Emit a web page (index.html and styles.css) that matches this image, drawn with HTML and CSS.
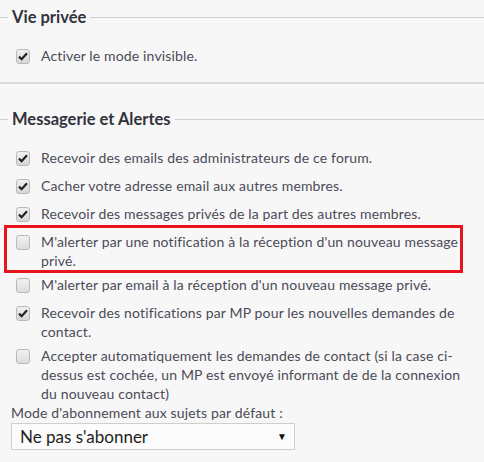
FILE: index.html
```html
<!DOCTYPE html>
<html lang="fr">
<head>
    <meta charset="UTF-8">
    <title>Préférences</title>
    <link rel="stylesheet" href="styles.css">
</head>
<body>
    <form class="prefs">
        <fieldset class="group">
            <legend>Vie privée</legend>
            <div class="options">
                <label class="option"><input type="checkbox" checked><span>Activer le mode invisible.</span></label>
            </div>
        </fieldset>

        <div class="separator"></div>

        <fieldset class="group">
            <legend>Messagerie et Alertes</legend>
            <div class="options">
                <label class="option"><input type="checkbox" checked><span>Recevoir des emails des administrateurs de ce forum.</span></label>
                <label class="option"><input type="checkbox" checked><span>Cacher votre adresse email aux autres membres.</span></label>
                <label class="option"><input type="checkbox" checked><span>Recevoir des messages privés de la part des autres membres.</span></label>
                <label class="option highlight"><input type="checkbox"><span>M'alerter par une notification à la réception d'un nouveau message privé.</span></label>
                <label class="option"><input type="checkbox"><span>M'alerter par email à la réception d'un nouveau message privé.</span></label>
                <label class="option"><input type="checkbox" checked><span>Recevoir des notifications par MP pour les nouvelles demandes de contact.</span></label>
                <label class="option"><input type="checkbox"><span>Accepter automatiquement les demandes de contact (si la case ci-dessus est cochée, un MP est envoyé informant de de la connexion du nouveau contact)</span></label>
            </div>

            <label class="field-label" for="sub-mode">Mode d'abonnement aux sujets par défaut :</label>
            <div class="select-wrap">
                <select id="sub-mode">
                    <option>Ne pas s'abonner</option>
                    <option>S'abonner sans notification</option>
                    <option>S'abonner avec notification</option>
                </select>
            </div>
        </fieldset>
    </form>
</body>
</html>
```

FILE: styles.css
```css
body {
    margin: 0;
    background-color: #f7f7f7;
    font-family: Lato, "Open Sans", sans-serif;
    font-size: 14px;
    letter-spacing: 0.15px;
    color: #4b4b57;
}

.prefs {
    margin: 0;
}

.group {
    margin: 6px 0 0;
    padding: 0 22px 0 11px;
    border: none;
    border-top: 1px solid #cdcdcd;
    min-width: 0;
}

.group legend {
    margin-left: -3px;
    padding: 0 4px;
    font-size: 16.5px;
    line-height: 22px;
    font-weight: bold;
    letter-spacing: 0;
    color: #32323c;
}

.options {
    display: flex;
    flex-direction: column;
    gap: 5px;
    margin-top: 18px;
    padding-left: 5px;
}

.option {
    display: flex;
    align-items: flex-start;
    gap: 11px;
    line-height: 19px;
    position: relative;
}

.option input {
    appearance: none;
    flex: none;
    width: 14px;
    height: 15px;
    margin: 3px 0 5px;
    border: 1px solid #b9b9b9;
    border-radius: 3px;
    background: linear-gradient(#f1f1f1, #dcdcdc);
    box-sizing: border-box;
}

.option input:checked {
    background:
        url("data:image/svg+xml,%3Csvg xmlns='http://www.w3.org/2000/svg' viewBox='0 0 14 15'%3E%3Cpath d='M3 7.6l2.6 2.6L11 4.2' fill='none' stroke='%23222' stroke-width='2.2'/%3E%3C/svg%3E") center / 14px 15px no-repeat,
        linear-gradient(#f1f1f1, #d6d6d6);
}

.highlight::after {
    content: "";
    position: absolute;
    top: -7px;
    bottom: -3px;
    left: -12px;
    right: -1px;
    border: 3px solid #e5141f;
    pointer-events: none;
}

.separator {
    margin-top: 13px;
    border-top: 2px solid #dcdcdc;
    margin-bottom: 24px;
}

.field-label {
    display: block;
    margin-top: 0;
    line-height: 19px;
}

.select-wrap {
    position: relative;
    width: 284px;
    margin-top: 1px;
}

.select-wrap select {
    appearance: none;
    width: 100%;
    height: 27px;
    padding: 0 8px;
    border: 1px solid #cfcfcf;
    border-radius: 0;
    background-color: #fcfcfc;
    font-family: Lato, "Open Sans", sans-serif;
    font-size: 17px;
    color: #1d1d22;
}

.select-wrap::after {
    content: "▼";
    position: absolute;
    right: 8px;
    top: 7px;
    font-size: 10px;
    color: #111;
    pointer-events: none;
}
```
